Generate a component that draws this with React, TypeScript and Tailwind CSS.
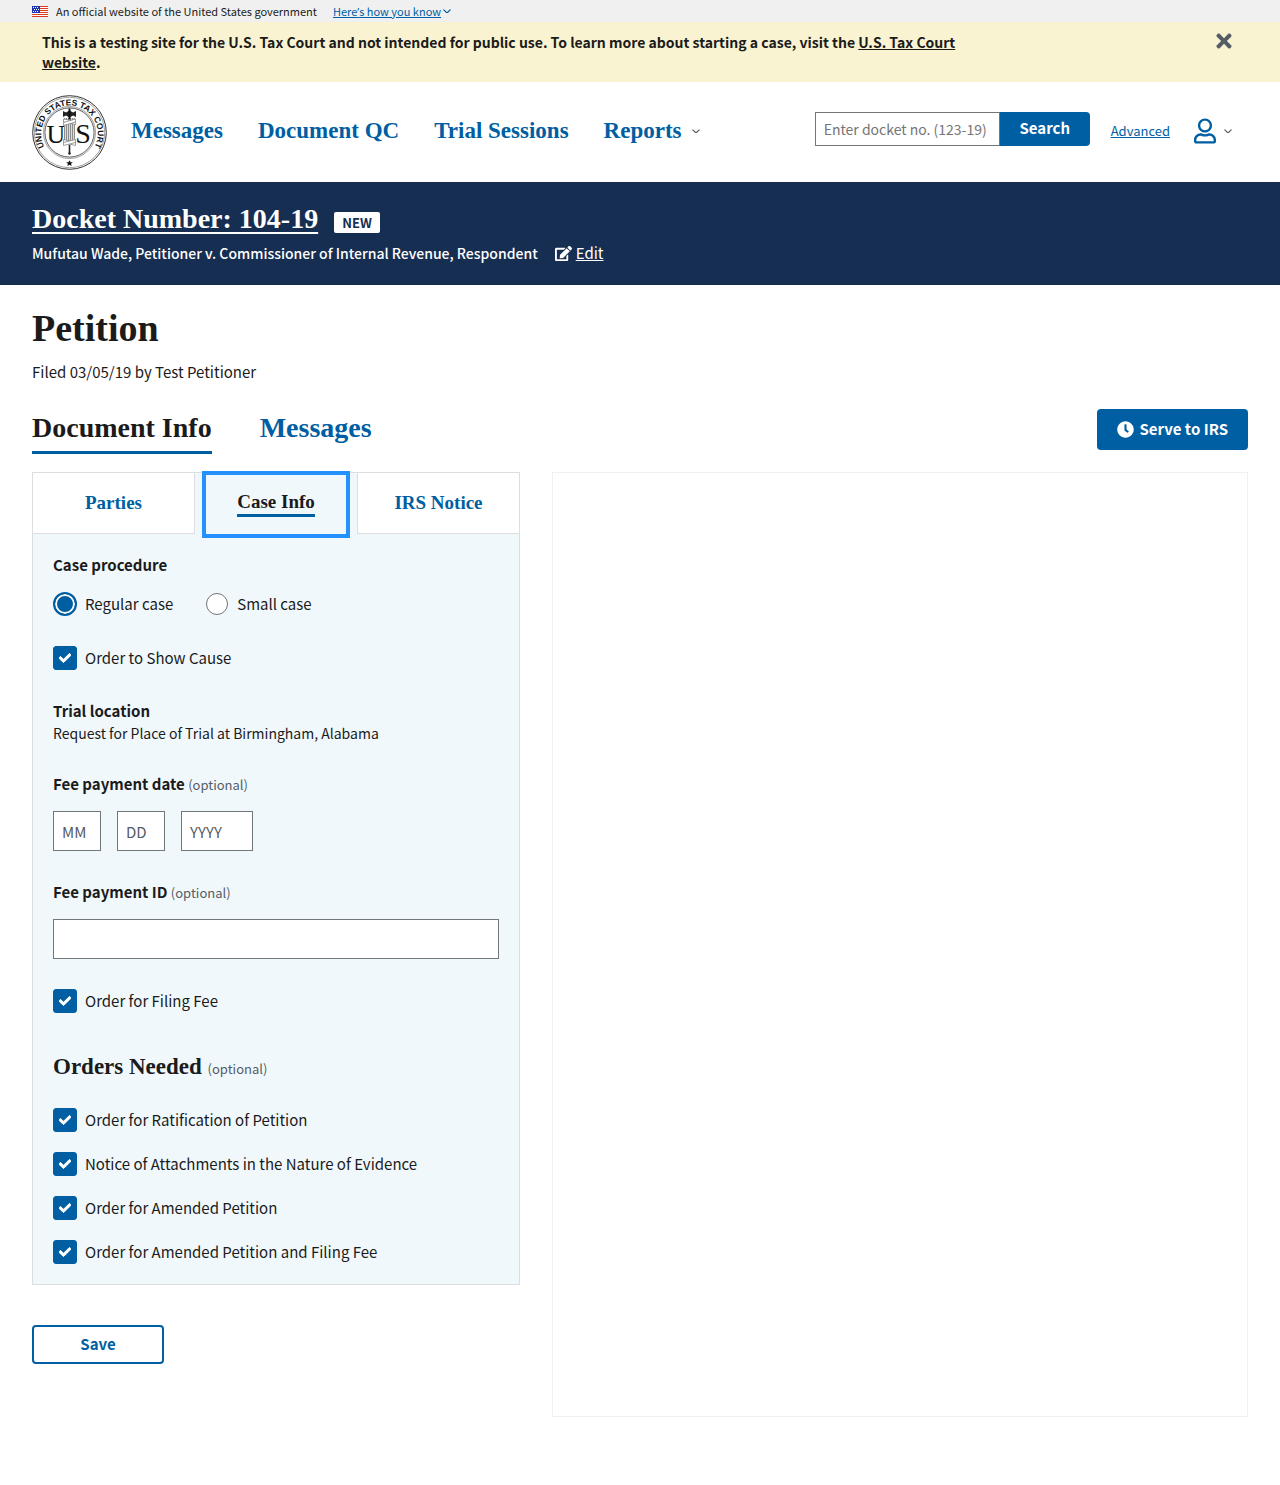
import React from "react";
import { FaCheck, FaClock, FaEdit, FaRegUser, FaTimes } from "react-icons/fa";

const SERIF = "font-['Liberation_Serif',serif]";

function ChevronDown({ className }: { className: string }) {
  return (
    <svg viewBox="0 0 10 6" className={className} fill="none" stroke="currentColor" strokeWidth="1.5" strokeLinecap="round" strokeLinejoin="round" aria-hidden="true">
      <path d="M1 1l4 4 4-4" />
    </svg>
  );
}

function Flag() {
  return (
    <svg viewBox="0 0 16 11" className="h-[11px] w-4" shapeRendering="crispEdges" aria-label="U.S. flag">
      <rect width="16" height="11" fill="#fff" />
      {[0, 2, 4, 6, 8, 10].map((y) => (
        <rect key={y} y={y} width="16" height="1" fill="#db3e1f" />
      ))}
      <rect width="8" height="7" fill="#1e33b1" />
      {[
        [1, 1], [3, 1], [5, 1], [2, 3], [4, 3], [6, 3], [1, 5], [3, 5], [5, 5],
      ].map(([x, y]) => (
        <rect key={`${x}-${y}`} x={x} y={y} width="1" height="1" fill="#fff" />
      ))}
    </svg>
  );
}

function Seal() {
  return (
    <svg viewBox="0 0 75 75" className="size-[75px]" role="img" aria-label="United States Tax Court seal">
      <defs>
        <path id="seal-arc" d="M 12.5 52 A 28.3 28.3 0 1 1 62.5 52" />
      </defs>
      <circle cx="37.5" cy="37.5" r="36.8" fill="#fff" stroke="#333" strokeWidth="1" />
      <circle cx="37.5" cy="37.5" r="35.2" fill="none" stroke="#777" strokeWidth="0.7" />
      <circle cx="37.5" cy="37.5" r="26" fill="none" stroke="#777" strokeWidth="0.7" />
      <circle cx="37.5" cy="37.5" r="24.6" fill="none" stroke="#333" strokeWidth="0.8" />
      <text fontFamily="Liberation Sans, sans-serif" fontWeight="700" fontSize="8.4" fill="#111" textAnchor="middle">
        <textPath href="#seal-arc" startOffset="50%">UNITED STATES TAX COURT</textPath>
      </text>
      <text x="23.8" y="47.5" fontFamily="Liberation Serif, serif" fontSize="26" fill="#111" textAnchor="middle">U</text>
      <text x="51" y="47.5" fontFamily="Liberation Serif, serif" fontSize="28" fill="#111" textAnchor="middle">S</text>
      <rect x="32" y="23" width="11" height="27" fill="#ddd" />
      <path d="M32.5 23v26M34.5 23v26M36.5 23v26M38.5 23v26M40.5 23v26M42.5 23v26" stroke="#777" strokeWidth="0.8" fill="none" />
      <path d="M31 16l3 1.5 2.5-1.5h2l2.5 1.5 3-1.5v6l-3-1.5-2.5 1.5h-2l-2.5-1.5-3 1.5z" fill="#222" />
      <path d="M36.5 13.5h2v11h-2z" fill="#111" />
      <g fill="#fff" stroke="#777" strokeWidth="0.7">
        <path d="M31.5 24l12 2.5v3l-12-2.5z" />
        <path d="M43.5 24l-12 3.5v3l12-3.5z" />
        <path d="M31.5 44.5l12 3v3l-12-3z" />
        <path d="M43.5 44.5l-12 3v3l12-3z" />
      </g>
      <path d="M36.7 50h1.6v9h-1.6z" fill="#222" />
      <circle cx="37.5" cy="58.5" r="1.2" fill="#222" />
      <path d="M37.5 65.2l1 2.1h2.4l-1.9 1.5.7 2.3-2.2-1.3-2.2 1.3.7-2.3-1.9-1.5h2.4z" fill="#111" />
    </svg>
  );
}

function Check({ id, label }: { id: string; label: string }) {
  return (
    <div className="flex items-center gap-2 leading-6">
      <span className="grid size-6 shrink-0 place-items-center">
        <input id={id} type="checkbox" defaultChecked className="peer col-start-1 row-start-1 size-6 appearance-none rounded-[3px] border border-[#71767a] bg-white checked:border-[#005ea2] checked:bg-[#005ea2]" />
        <FaCheck className="pointer-events-none invisible col-start-1 row-start-1 size-3 stroke-white stroke-[40px] text-white peer-checked:visible" />
      </span>
      <label htmlFor={id}>{label}</label>
    </div>
  );
}

function Radio({ id, label, checked = false }: { id: string; label: string; checked?: boolean }) {
  return (
    <div className="flex items-center gap-2 leading-6">
      <span className="grid size-6 shrink-0 place-items-center">
        <input id={id} name="procedure" type="radio" defaultChecked={checked} className="size-[22px] appearance-none rounded-full border border-[#71767a] bg-white checked:size-6 checked:border-2 checked:border-[#005ea2] checked:bg-[#005ea2] checked:shadow-[inset_0_0_0_2px_white]" />
      </span>
      <label htmlFor={id}>{label}</label>
    </div>
  );
}

const Optional = () => <span className="font-['Noto_Sans_CJK_SC',sans-serif] text-[13px] font-normal text-[#565c65]">(optional)</span>;

const dateField = "h-10 border border-[#71767a] bg-white px-2 placeholder:text-[#565c65]";

export default function App() {
  return (
    <div className="min-h-screen bg-white font-['Noto_Sans_CJK_SC',sans-serif] text-[15px] text-[#1b1b1b]">
      <div className="flex h-[22px] items-center bg-[#f0f0f0] px-8 text-[11px] leading-[22px]">
        <Flag />
        <span className="ml-2">An official website of the United States government</span>
        <button className="ml-4 flex items-center gap-0.5 text-[#005ea2]">
          <span className="underline">Here<span className="font-['Open_Sans',sans-serif]">’</span>s how you know</span>
          <ChevronDown className="w-2" />
        </button>
      </div>

      <div className="flex items-start justify-between bg-[#faf3d1] py-2.5 pr-[45px] pl-[42px]">
        <p className="max-w-[960px] text-[14px] leading-5 font-bold">
          This is a testing site for the U.S. Tax Court and not intended for public use. To learn more about starting a case, visit the{" "}
          <a href="#court" className="underline">U.S. Tax Court website</a>.
        </p>
        <button aria-label="Close" className="-mt-0.5 text-[#565c65]">
          <FaTimes className="size-[22px]" />
        </button>
      </div>

      <header className="flex h-[100px] items-center px-8 pb-0.5">
        <a href="#home" className="mt-0.5"><Seal /></a>
        <nav className={`ml-6 flex items-center gap-[35px] text-[23px] leading-7 font-bold text-[#005ea2] ${SERIF}`}>
          <a href="#messages">Messages</a>
          <a href="#qc">Document QC</a>
          <a href="#trials">Trial Sessions</a>
          <button className="flex items-center gap-2.5">
            Reports
            <ChevronDown className="w-2 text-[#565c65]" />
          </button>
        </nav>
        <form className="mb-1 ml-auto flex" onSubmit={(e) => e.preventDefault()}>
          <input aria-label="Docket number" placeholder="Enter docket no. (123-19)" className="h-[34px] w-[185px] border border-[#71767a] px-2 text-[14px] placeholder:text-[#757575]" />
          <button className="h-[34px] w-[90px] rounded-r bg-[#005ea2] pb-0.5 text-[15px] leading-8 font-bold text-white">Search</button>
        </form>
        <a href="#advanced" className="ml-[21px] text-[13px] text-[#005ea2] underline">Advanced</a>
        <button aria-label="Account" className="mr-4 ml-6 flex items-center gap-2 text-[#005ea2]">
          <FaRegUser className="h-[26px] w-[22px]" />
          <ChevronDown className="w-2 text-[#565c65]" />
        </button>
      </header>

      <section className="bg-[#162e51] px-8 pt-[19px] pb-5 text-white">
        <div className="flex items-center gap-4">
          <h1 className={`text-[28px] leading-9 font-bold ${SERIF}`}>
            <a href="#docket" className="underline decoration-2 underline-offset-4">Docket Number: 104-19</a>
          </h1>
          <span className="mt-1.5 rounded-xs bg-white px-2 text-[13px] leading-[21px] font-bold text-[#162e51]">NEW</span>
        </div>
        <div className="mt-1 flex items-center leading-6">
          <p className="text-[14px] font-medium">Mufutau Wade, Petitioner v. Commissioner of Internal Revenue, Respondent</p>
          <a href="#edit" className="ml-[17px] flex items-center gap-1">
            <FaEdit className="size-[17px]" />
            <span className="underline">Edit</span>
          </a>
        </div>
      </section>

      <main className="px-8 pb-16">
        <h2 className={`pt-[21px] text-[38px] leading-[44px] font-bold ${SERIF}`}>Petition</h2>
        <p className="mt-2.5 leading-6">Filed 03/05/19 by Test Petitioner</p>

        <div className="mt-[25px] flex items-start justify-between">
          <div role="tablist" className={`flex gap-12 text-[28px] leading-[38px] font-bold ${SERIF}`}>
            <button role="tab" aria-selected="true" className="border-b-3 border-[#005ea2] pb-1">Document Info</button>
            <button role="tab" aria-selected="false" className="border-b-3 border-transparent pb-1 text-[#005ea2]">Messages</button>
          </div>
          <button className="flex h-[41px] items-center gap-[5px] rounded bg-[#005ea2] px-5 text-[15px] font-bold text-white">
            <FaClock className="size-[17px]" />
            Serve to IRS
          </button>
        </div>

        <div className="mt-[18px] flex items-start gap-8">
          <div className="w-[488px] shrink-0">
            <div className="border border-[#dcdee0] bg-[#f0f8fc]">
              <div role="tablist" className={`grid h-[61px] grid-cols-3 text-[19px] leading-6 font-bold text-[#005ea2] ${SERIF}`}>
                <button role="tab" aria-selected="false" className="border-r border-b border-[#dcdee0] bg-white">Parties</button>
                <button role="tab" aria-selected="true" className="mx-[11px] mt-0.5 bg-[#f0f8fc] pb-0.5 text-[#1b1b1b] outline-4 outline-[#2491ff]">
                  <span className="inline-block border-b-3 border-[#005ea2]">Case Info</span>
                </button>
                <button role="tab" aria-selected="false" className="border-b border-l border-[#dcdee0] bg-white">IRS Notice</button>
              </div>

              <form className="px-5 pt-[19px] pb-5" onSubmit={(e) => e.preventDefault()}>
                <fieldset>
                  <legend className="leading-6 font-bold">Case procedure</legend>
                  <div className="mt-[15px] flex gap-8">
                    <Radio id="regular" label="Regular case" checked />
                    <Radio id="small" label="Small case" />
                  </div>
                </fieldset>
                <div className="mt-[30px]"><Check id="show-cause" label="Order to Show Cause" /></div>

                <h3 className="mt-[30px] leading-[22px] font-bold">Trial location</h3>
                <p className="text-[14px] leading-[22px]">Request for Place of Trial at Birmingham, Alabama</p>

                <fieldset className="mt-7">
                  <legend className="leading-6 font-bold">Fee payment date <Optional /></legend>
                  <div className="mt-[14px] flex gap-4">
                    <input aria-label="Month" placeholder="MM" className={`w-12 ${dateField}`} />
                    <input aria-label="Day" placeholder="DD" className={`w-12 ${dateField}`} />
                    <input aria-label="Year" placeholder="YYYY" className={`w-[72px] ${dateField}`} />
                  </div>
                </fieldset>

                <label htmlFor="fee-id" className="mt-[29px] block leading-6 font-bold">Fee payment ID <Optional /></label>
                <input id="fee-id" className="mt-[14px] block h-10 w-full border border-[#71767a] bg-white px-2" />

                <div className="mt-[30px]"><Check id="filing-fee" label="Order for Filing Fee" /></div>

                <fieldset className="mt-10">
                  <legend className={`text-[23px] leading-7 font-bold ${SERIF}`}>Orders Needed <Optional /></legend>
                  <div className="mt-[25px] flex flex-col gap-5">
                    <Check id="ratification" label="Order for Ratification of Petition" />
                    <Check id="attachments" label="Notice of Attachments in the Nature of Evidence" />
                    <Check id="amended" label="Order for Amended Petition" />
                    <Check id="amended-fee" label="Order for Amended Petition and Filing Fee" />
                  </div>
                </fieldset>
              </form>
            </div>
            <button className="mt-10 h-[39px] w-[132px] rounded border-2 border-[#005ea2] font-bold text-[#005ea2]">Save</button>
          </div>
          <section aria-label="Document preview" className="min-h-[945px] flex-1 border border-[#f0f0f0]" />
        </div>
      </main>
    </div>
  );
}
